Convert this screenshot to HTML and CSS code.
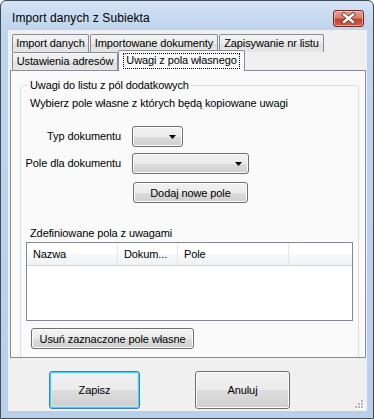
FILE: index.html
```html
<!DOCTYPE html>
<html lang="pl">
<head>
<meta charset="utf-8">
<title>Import danych z Subiekta</title>
<link rel="stylesheet" href="styles.css">
</head>
<body>
<div class="window">
  <div class="titlebar">
    <span class="title">Import danych z Subiekta</span>
    <div class="close">
      <svg width="29" height="15" viewBox="0 0 29 15">
        <path d="M10 3.5 L19 11 M19 3.5 L10 11" stroke="#6b3b35" stroke-width="4.2" stroke-linecap="square"/>
        <path d="M10 3.5 L19 11 M19 3.5 L10 11" stroke="#ffffff" stroke-width="2.4" stroke-linecap="square"/>
      </svg>
    </div>
  </div>
  <div class="client">
    <div class="tabctl">
      <div class="tabrow">
        <div class="tab t-import">Import danych</div>
        <div class="tab t-docs">Importowane dokumenty</div>
        <div class="tab t-save">Zapisywanie nr listu</div>
      </div>
      <div class="tabrow">
        <div class="tab t-addr">Ustawienia adresów</div>
        <div class="tab tab-active"><span class="focus">Uwagi z pola własnego</span></div>
      </div>
      <div class="panel">
        <fieldset class="group">
          <legend>Uwagi do listu z pól dodatkowych</legend>
          <div class="hint">Wybierz pole własne z których będą kopiowane uwagi</div>
          <div class="form">
            <span class="lbl">Typ dokumentu</span>
            <div class="combo combo-short"><svg width="7" height="4" viewBox="0 0 7 4"><path d="M0 0H7L3.5 4Z" fill="#000"/></svg></div>
            <span class="lbl">Pole dla dokumentu</span>
            <div class="combo combo-long"><svg width="7" height="4" viewBox="0 0 7 4"><path d="M0 0H7L3.5 4Z" fill="#000"/></svg></div>
            <button class="btn btn-add">Dodaj nowe pole</button>
          </div>
          <div class="caption">Zdefiniowane pola z uwagami</div>
          <div class="listview">
            <div class="lv-head">
              <div class="col col-name">Nazwa</div>
              <div class="col col-doc">Dokum...</div>
              <div class="col col-field">Pole</div>
              <div class="col col-rest"></div>
            </div>
          </div>
          <button class="btn btn-del">Usuń zaznaczone pole własne</button>
        </fieldset>
      </div>
    </div>
    <div class="footer">
      <button class="btn btn-big btn-default">Zapisz</button>
      <button class="btn btn-big btn-cancel">Anuluj</button>
      <svg class="grip" width="9" height="9" viewBox="0 0 9 9">
        <g fill="#ffffff"><rect x="7" y="1" width="2" height="2"/><rect x="4" y="4" width="2" height="2"/><rect x="7" y="4" width="2" height="2"/><rect x="1" y="7" width="2" height="2"/><rect x="4" y="7" width="2" height="2"/><rect x="7" y="7" width="2" height="2"/></g>
        <g fill="#b4b4b4"><rect x="6" y="0" width="2" height="2"/><rect x="3" y="3" width="2" height="2"/><rect x="6" y="3" width="2" height="2"/><rect x="0" y="6" width="2" height="2"/><rect x="3" y="6" width="2" height="2"/><rect x="6" y="6" width="2" height="2"/></g>
      </svg>
    </div>
  </div>
</div>
</body>
</html>
```

FILE: styles.css
```css
* { box-sizing: border-box; }

body {
  margin: 0;
  background: #ffffff;
  font-family: "Liberation Sans", Arial, sans-serif;
  font-size: 11px;
  letter-spacing: -0.1px;
  color: #000;
}

.window {
  width: 374px;
  height: 419px;
  border: 1px solid #3d4b5c;
  border-radius: 6px 6px 0 0;
  background: linear-gradient(#d5e3f4, #bfd4ed 28px, #bad0ea);
  padding: 0 6px 7px 7px;
  display: flex;
  flex-direction: column;
  overflow: hidden;
}

.titlebar {
  flex: none;
  height: 29px;
  padding: 5px 0 0 4px;
  display: flex;
  align-items: flex-start;
}

.title {
  font-family: "Liberation Sans", Arial, sans-serif;
  font-size: 12px;
  letter-spacing: 0.1px;
  line-height: 24px;
}

.close {
  margin: 4px 3px 0 auto;
  width: 31px;
  height: 17px;
  border: 1px solid #6f2c24;
  border-radius: 3px;
  background: linear-gradient(#e6a091 0, #d8806e 45%, #c5402b 55%, #d3604a 100%);
  box-shadow: inset 0 0 0 1px rgba(255, 220, 210, 0.55);
  display: flex;
  align-items: center;
  justify-content: center;
}

.client {
  flex: 1;
  background: #f0f0f0;
  display: flex;
  flex-direction: column;
}

.tabctl {
  margin: 4px 0 0 2px;
  width: 356px;
  flex: none;
}

.tabrow {
  height: 18px;
  display: flex;
  gap: 1px;
  padding-left: 2px;
}

.tab {
  height: 18px;
  border: 1px solid #898c95;
  border-bottom: none;
  border-radius: 2px 2px 0 0;
  background: linear-gradient(#f3f3f3, #ececec 50%, #dedede 51%, #e6e6e6);
  line-height: 16px;
  text-align: center;
  white-space: nowrap;
}

.t-import { width: 77px; }
.t-docs { width: 128px; }
.t-save { width: 105px; }
.t-addr { width: 106px; }

.tab-active {
  position: relative;
  z-index: 1;
  width: 127px;
  height: 21px;
  margin: -2px 0 -1px -1px;
  background: #fafafa;
  padding-top: 2px;
  line-height: 13px;
}

.focus {
  display: inline-block;
  border: 1px dotted #000;
  padding: 0 2px 1px 2px;
}

.panel {
  height: 288px;
  border: 1px solid #898c95;
  background: #fafafa;
  overflow: hidden;
}

.group {
  margin: 8px 6px 0 9px;
  padding: 0;
  min-width: 0;
  height: 300px;
  border: 1px solid #d5dfe5;
  border-radius: 3px;
}

.group legend {
  margin-left: 7px;
  padding: 0 2px;
  line-height: 13px;
}

.hint {
  margin: 5px 0 0 9px;
  line-height: 13px;
}

.form {
  margin: 16px 0 0 6px;
  display: grid;
  grid-template-columns: 94px auto;
  column-gap: 11px;
  row-gap: 6px;
  align-items: center;
  justify-items: start;
}

.lbl {
  justify-self: end;
  line-height: 13px;
  white-space: nowrap;
}

.combo {
  height: 21px;
  border: 1px solid #707070;
  border-radius: 3px;
  background: linear-gradient(#f2f2f2 0, #ebebeb 50%, #dddddd 51%, #cfcfcf 100%);
  box-shadow: inset 0 0 0 1px #fbfbfb;
  display: flex;
  align-items: center;
  justify-content: flex-end;
  padding-right: 6px;
}

.combo-short { width: 51px; }
.combo-long { width: 117px; }

.btn {
  font: inherit;
  letter-spacing: inherit;
  color: #000;
  border: 1px solid #707070;
  border-radius: 3px;
  background: linear-gradient(#f2f2f2 0, #ebebeb 50%, #dddddd 51%, #cfcfcf 100%);
  box-shadow: inset 0 0 0 1px #fbfbfb;
  padding: 0;
  text-align: center;
}

.btn-add {
  grid-column: 2;
  width: 115px;
  height: 21px;
  margin: 2px 0 0 1px;
}

.caption {
  margin: 24px 0 0 9px;
  line-height: 13px;
}

.listview {
  margin: 2px 0 0 5px;
  width: 327px;
  height: 79px;
  border: 1px solid #828790;
  background: #fff;
}

.lv-head {
  height: 23px;
  display: flex;
  background: linear-gradient(#ffffff 0, #ffffff 45%, #f7f8fa 55%, #f1f2f4 100%);
  border-bottom: 1px solid #d5d5d5;
}

.col {
  height: 22px;
  line-height: 22px;
  padding-left: 6px;
  border-right: 1px solid #e3e5e8;
  white-space: nowrap;
}

.col-name { width: 91px; }
.col-doc { width: 60px; }
.col-field { width: 111px; }
.col-rest { flex: 1; border-right: none; }

.btn-del {
  display: block;
  margin: 7px 0 0 10px;
  width: 163px;
  height: 21px;
}

.footer {
  flex: 1;
  position: relative;
  display: flex;
  align-items: flex-start;
  gap: 55px;
  padding: 13px 0 0 41px;
}

.btn-big {
  height: 38px;
}

.btn-default {
  width: 91px;
  border-color: #3c7fb1;
  box-shadow: inset 0 0 0 1px #48d0f5, inset 0 0 0 2px #b9eafb;
}

.btn-cancel {
  width: 95px;
}

.grip {
  position: absolute;
  right: 3px;
  bottom: 2px;
}
```
